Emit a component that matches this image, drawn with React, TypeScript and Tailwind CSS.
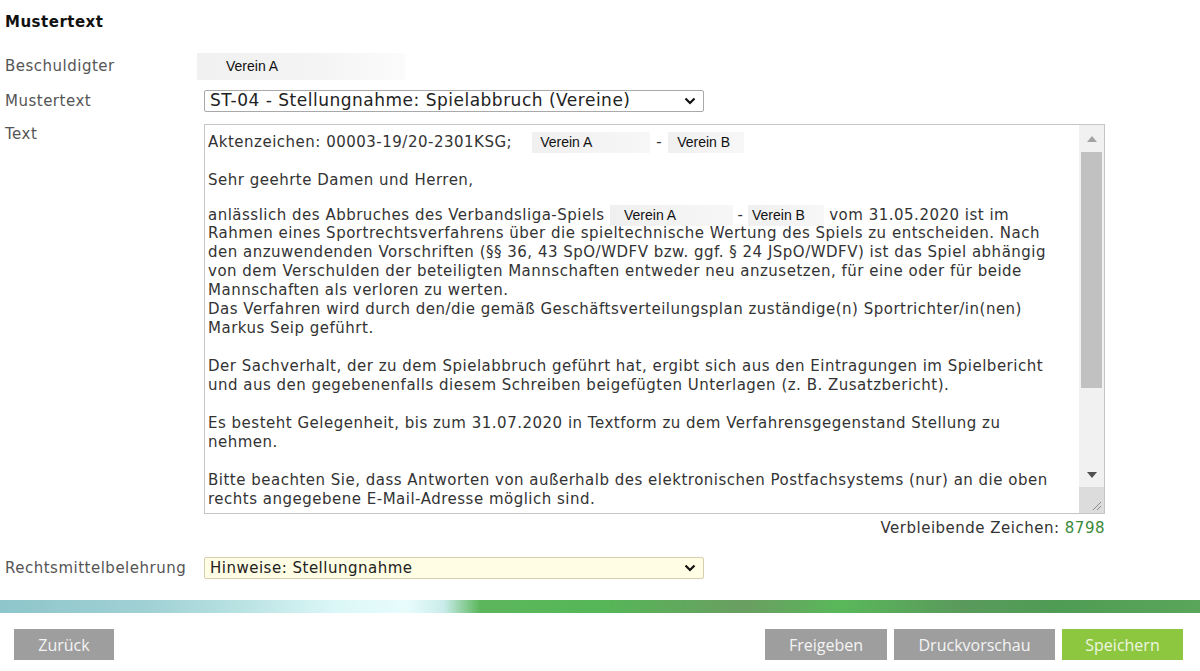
import React from "react";

const Club = ({ name, w, pl = 8 }: { name: string; w: number; pl?: number }) => (
  <span
    className="inline-block align-middle h-[21px] leading-[21px] tracking-normal bg-gradient-to-r from-[#f0f0f0] to-[#f7f7f7] text-[14px] text-[#111] font-['Liberation_Sans',Arial,sans-serif]"
    style={{ width: w, paddingLeft: pl }}
  >
    {name}
  </span>
);

const Chevron = () => (
  <svg width="12" height="8" viewBox="0 0 12 8" className="shrink-0">
    <path d="M1.5 1.5l4.5 4.5 4.5-4.5" fill="none" stroke="#111" strokeWidth="2.2" />
  </svg>
);

const Line = ({ children }: { children?: React.ReactNode }) => (
  <div className="h-[19px] leading-[19px] whitespace-nowrap">{children}</div>
);

export default function App() {
  return (
    <div className="w-[1200px] h-[671px] overflow-hidden bg-white font-['DejaVu_Sans',Verdana,sans-serif] text-[15px] tracking-[0.5px] text-[#333]">
      {/* Kopf */}
      <div className="pl-[5px] pt-[13px] leading-[18px] font-bold text-[#111]">Mustertext</div>

      {/* Formular */}
      <div className="pl-[5px] grid grid-cols-[199px_901px] text-[#555]">
        <div className="mt-[22px] h-[27px] flex items-center">Beschuldigter</div>
        <div className="mt-[22px] h-[27px] -ml-[7px] flex items-center">
          <div className="w-[208px] h-[27px] flex items-center pl-[29px] tracking-normal bg-gradient-to-r from-[#f1f1f1] via-[#f3f3f3] to-[#fbfbfb] text-[14px] text-[#111] font-['Liberation_Sans',Arial,sans-serif]">
            Verein A
          </div>
        </div>

        <div className="mt-[10px] h-[22px] flex items-center">Mustertext</div>
        <div className="mt-[10px] h-[22px] w-[500px] border border-[#a9a9a9] rounded-[2px] flex items-center justify-between pl-[5px] pr-[7px] text-[#222]">
          <span className="text-[17px] tracking-[0.5px]">ST-04 - Stellungnahme: Spielabbruch (Vereine)</span>
          <Chevron />
        </div>

        <div className="mt-[12px] pt-[1px] leading-[19px]">Text</div>
        <div className="mt-[12px] h-[390px] w-[901px] border border-[#c6c6c6] flex overflow-hidden">
          <div className="flex-1 pl-[3px] pt-[7px] text-[#333]">
            <Line>
              Aktenzeichen: 00003-19/20-2301KSG;
              <span className="ml-[20px]">
                <Club name="Verein A" w={118} />
              </span>
              <span className="inline-block w-[18px] text-center">-</span>
              <Club name="Verein B" w={76} pl={9} />
            </Line>
            <div className="h-[20px]" />
            <Line>Sehr geehrte Damen und Herren,</Line>
            <div className="h-[15px]" />
            <Line>
              anlässlich des Abbruches des Verbandsliga-Spiels{" "}
              <Club name="Verein A" w={123} pl={14} />
              <span className="inline-block w-[15px] text-center">-</span>
              <Club name="Verein B" w={76} pl={4} /> vom 31.05.2020 ist im
            </Line>
            <Line>Rahmen eines Sportrechtsverfahrens über die spieltechnische Wertung des Spiels zu entscheiden. Nach</Line>
            <Line>den anzuwendenden Vorschriften (§§ 36, 43 SpO/WDFV bzw. ggf. § 24 JSpO/WDFV) ist das Spiel abhängig</Line>
            <Line>von dem Verschulden der beteiligten Mannschaften entweder neu anzusetzen, für eine oder für beide</Line>
            <Line>Mannschaften als verloren zu werten.</Line>
            <Line>Das Verfahren wird durch den/die gemäß Geschäftsverteilungsplan zuständige(n) Sportrichter/in(nen)</Line>
            <Line>Markus Seip geführt.</Line>
            <Line />
            <Line>Der Sachverhalt, der zu dem Spielabbruch geführt hat, ergibt sich aus den Eintragungen im Spielbericht</Line>
            <Line>und aus den gegebenenfalls diesem Schreiben beigefügten Unterlagen (z. B. Zusatzbericht).</Line>
            <Line />
            <Line>Es besteht Gelegenheit, bis zum 31.07.2020 in Textform zu dem Verfahrensgegenstand Stellung zu</Line>
            <Line>nehmen.</Line>
            <Line />
            <Line>Bitte beachten Sie, dass Antworten von außerhalb des elektronischen Postfachsystems (nur) an die oben</Line>
            <Line>rechts angegebene E-Mail-Adresse möglich sind.</Line>
          </div>

          {/* Scrollleiste */}
          <div className="w-[25px] bg-[#f1f1f1] flex flex-col">
            <div className="h-[27px] flex items-center justify-center">
              <svg width="10" height="6" viewBox="0 0 10 6">
                <path d="M0 6L5 0l5 6z" fill="#a3a3a3" />
              </svg>
            </div>
            <div className="mx-[2px] h-[236px] bg-[#c1c1c1]" />
            <div className="flex-1" />
            <div className="h-[24px] flex items-center justify-center">
              <svg width="10" height="6" viewBox="0 0 10 6">
                <path d="M0 0l5 6 5-6z" fill="#505050" />
              </svg>
            </div>
            <div className="h-[26px] bg-[#dcdcdc] flex items-end justify-end p-[2px]">
              <svg width="12" height="12" viewBox="0 0 12 12">
                <path d="M11 3L3 11M11 7L7 11" stroke="#888" strokeWidth="1" />
              </svg>
            </div>
          </div>
        </div>

        <div />
        <div className="mt-[5px] h-[18px] leading-[18px] text-right text-[#333]">
          Verbleibende Zeichen: <span className="text-[#3a8a3a]">8798</span>
        </div>

        <div className="mt-[20px] h-[22px] flex items-center">Rechtsmittelbelehrung</div>
        <div className="mt-[20px] h-[22px] w-[500px] border border-[#d6d0b0] rounded-[2px] bg-[#fffde3] flex items-center justify-between pl-[5px] pr-[7px] text-[#222]">
          <span>Hinweise: Stellungnahme</span>
          <Chevron />
        </div>
      </div>

      {/* Farbbalken */}
      <div className="mt-[21px] h-[13px] bg-[linear-gradient(90deg,#8ec6cb_0%,#9fd0d4_12%,#b9e2e3_20%,#dcf7f7_28%,#e8fcfc_34%,#c9ecea_37%,#5cb65c_40%,#55b757_50%,#6a9e62_62%,#59b85a_70%,#5a9a5c_80%,#4f9c55_88%,#5aa65a_100%)]" />

      {/* Buttons */}
      <div className="mt-[16px] flex items-center pl-[14px] pr-[17px] font-['Open_Sans',Tahoma,sans-serif] text-[16px] tracking-normal">
        <button className="w-[100px] h-[31px] bg-[#9e9e9e] text-[#f4f4f4]">Zurück</button>
        <div className="flex-1" />
        <div className="flex gap-[7px]">
          <button className="w-[122px] h-[31px] bg-[#9e9e9e] text-[#f4f4f4]">Freigeben</button>
          <button className="w-[161px] h-[31px] bg-[#9e9e9e] text-[#f4f4f4]">Druckvorschau</button>
          <button className="w-[121px] h-[31px] bg-[#8dc63f] text-[#eef7e0]">Speichern</button>
        </div>
      </div>
    </div>
  );
}
